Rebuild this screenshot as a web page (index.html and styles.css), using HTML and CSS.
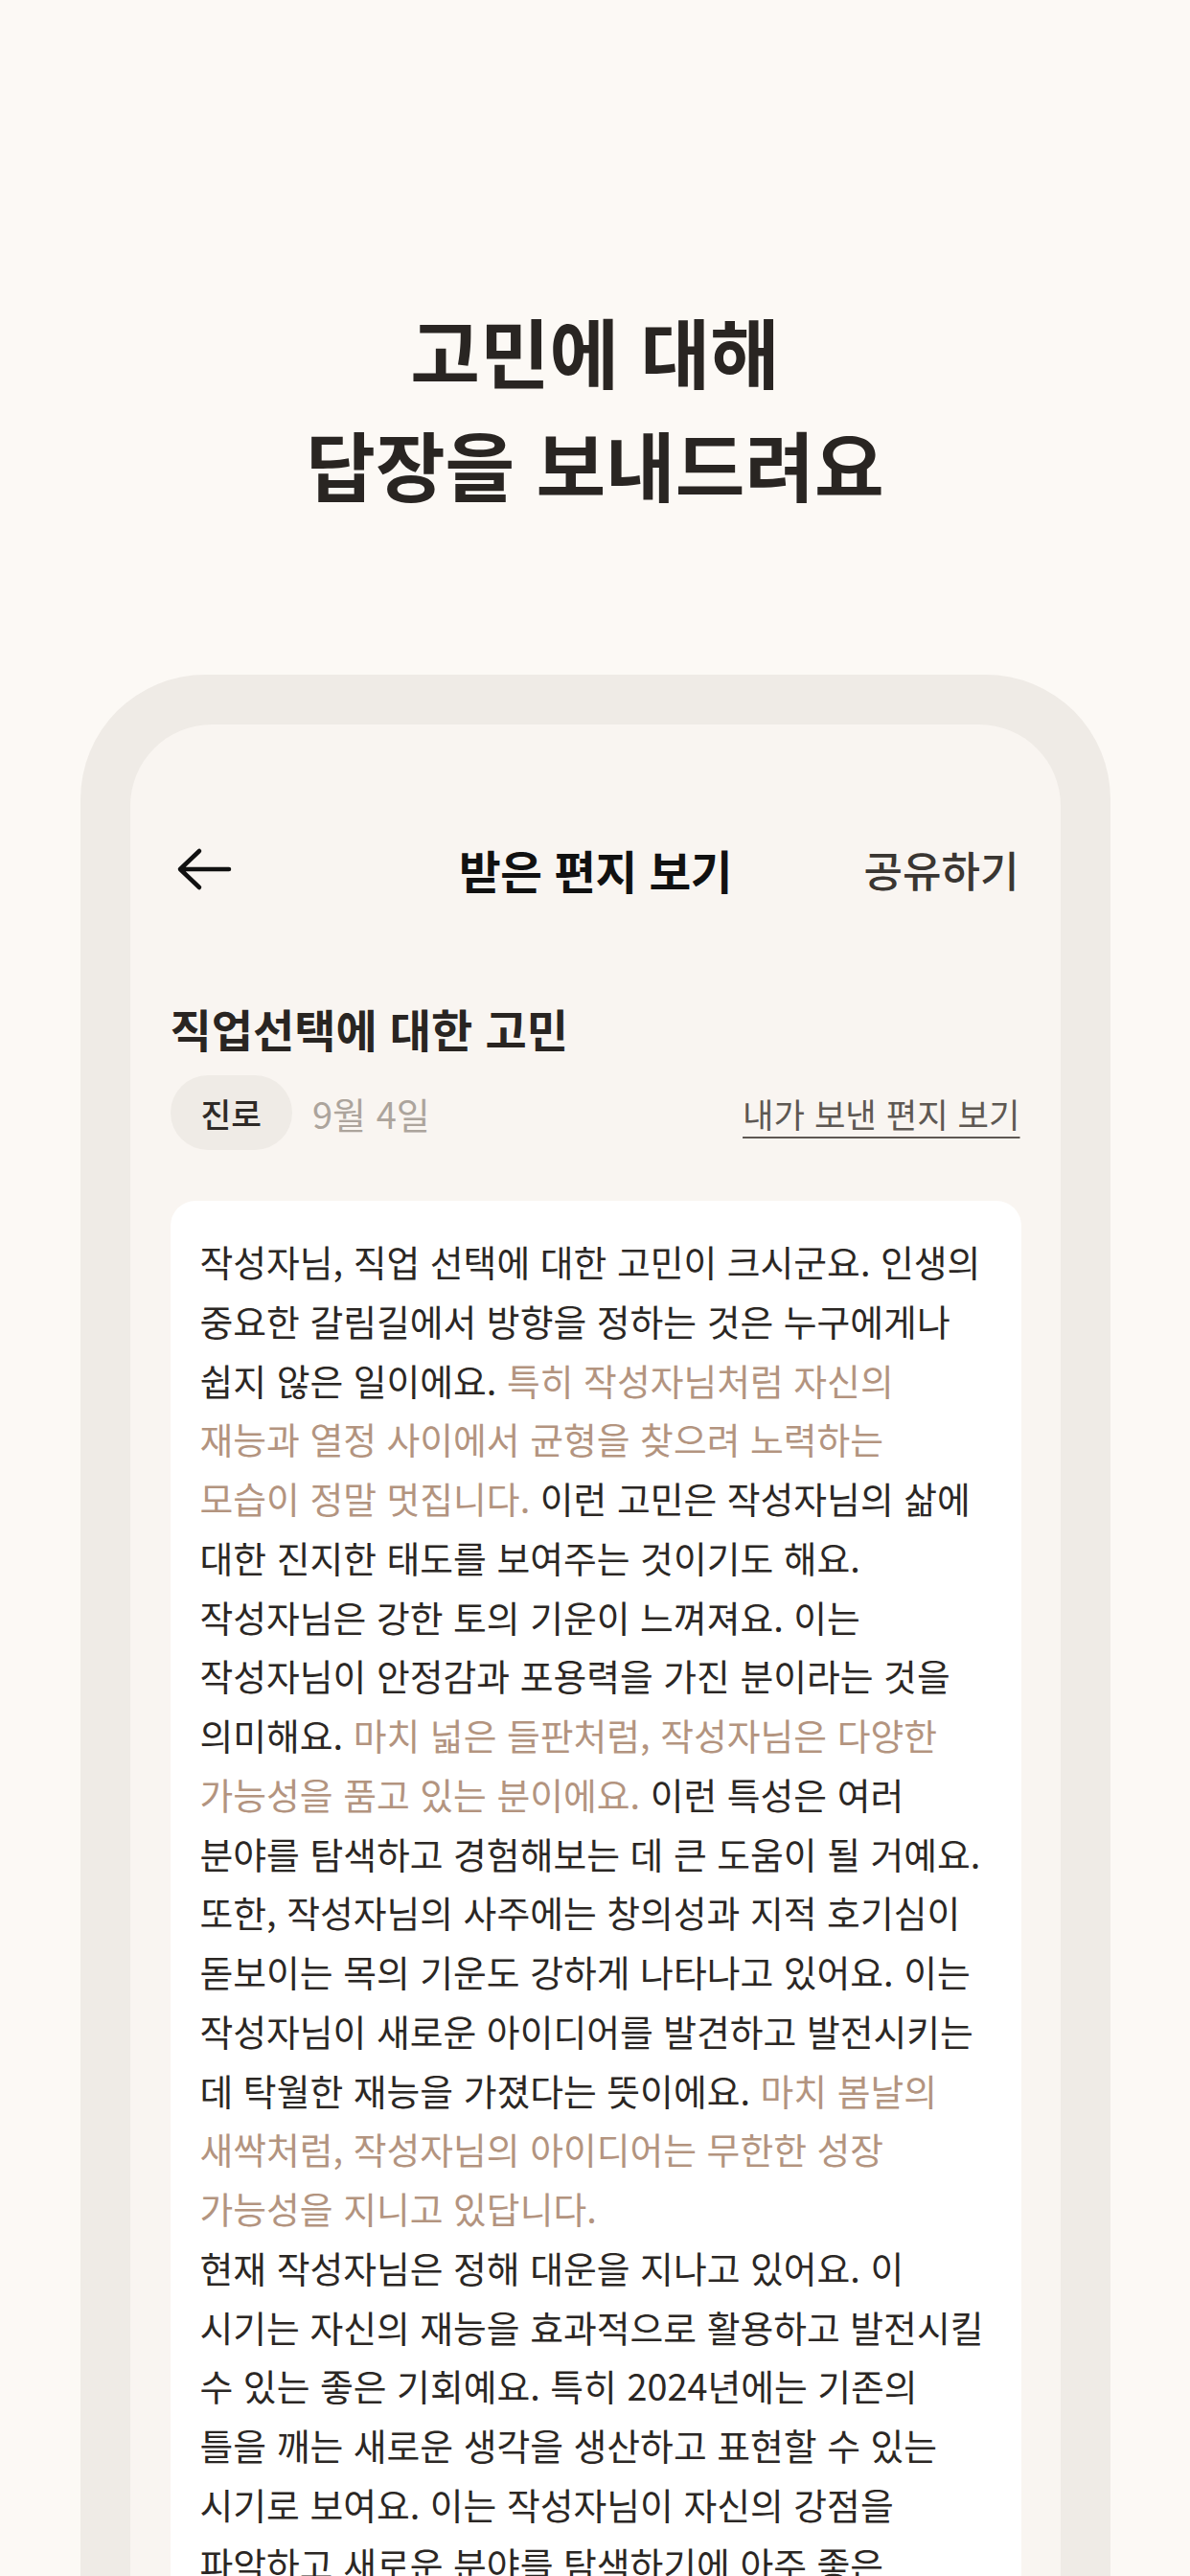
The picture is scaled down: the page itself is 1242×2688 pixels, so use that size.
FILE: index.html
```html
<!DOCTYPE html>
<html lang="ko">
<head>
<meta charset="utf-8">
<title>받은 편지 보기</title>
<link rel="stylesheet" href="styles.css">
</head>
<body>
<div class="page">
  <h1 class="hero-title">고민에 대해<br>답장을 보내드려요</h1>

  <div class="device">
    <div class="screen">
      <header class="nav">
        <button class="nav-back" aria-label="뒤로가기">
          <svg width="60" height="48" viewBox="0 0 60 48" aria-hidden="true">
            <path d="M5 24 H56 M25 5 L5 24 L25 43" fill="none" stroke="#111111" stroke-width="4.5" stroke-linecap="round" stroke-linejoin="round"/>
          </svg>
        </button>
        <div class="nav-title">받은 편지 보기</div>
        <div class="nav-action">공유하기</div>
      </header>

      <h2 class="subject">직업선택에 대한 고민</h2>
      <div class="meta">
        <span class="chip">진로</span>
        <span class="date">9월 4일</span>
        <a class="sent-link" href="#">내가 보낸 편지 보기</a>
      </div>

      <article class="letter">
        <p class="letter-text">작성자님, 직업 선택에 대한 고민이 크시군요. 인생의<br>중요한 갈림길에서 방향을 정하는 것은 누구에게나<br>쉽지 않은 일이에요. <span class="hl">특히 작성자님처럼 자신의<br>재능과 열정 사이에서 균형을 찾으려 노력하는<br>모습이 정말 멋집니다.</span> 이런 고민은 작성자님의 삶에<br>대한 진지한 태도를 보여주는 것이기도 해요.<br>작성자님은 강한 토의 기운이 느껴져요. 이는<br>작성자님이 안정감과 포용력을 가진 분이라는 것을<br>의미해요. <span class="hl">마치 넓은 들판처럼, 작성자님은 다양한<br>가능성을 품고 있는 분이에요.</span> 이런 특성은 여러<br>분야를 탐색하고 경험해보는 데 큰 도움이 될 거예요.<br>또한, 작성자님의 사주에는 창의성과 지적 호기심이<br>돋보이는 목의 기운도 강하게 나타나고 있어요. 이는<br>작성자님이 새로운 아이디어를 발견하고 발전시키는<br>데 탁월한 재능을 가졌다는 뜻이에요. <span class="hl">마치 봄날의<br>새싹처럼, 작성자님의 아이디어는 무한한 성장<br>가능성을 지니고 있답니다.</span><br>현재 작성자님은 정해 대운을 지나고 있어요. 이<br>시기는 자신의 재능을 효과적으로 활용하고 발전시킬<br>수 있는 좋은 기회예요. 특히 2024년에는 기존의<br>틀을 깨는 새로운 생각을 생산하고 표현할 수 있는<br>시기로 보여요. 이는 작성자님이 자신의 강점을<br>파악하고 새로운 분야를 탐색하기에 아주 좋은</p>
      </article>
    </div>
  </div>
</div>
</body>
</html>
```

FILE: styles.css
```css
* {
  box-sizing: border-box;
}

html, body {
  margin: 0;
  padding: 0;
}

body {
  background: #fcf9f5;
  font-family: "Noto Sans CJK KR", "Noto Sans", sans-serif;
  color: #2b2724;
}

.page {
  height: 2688px;
  overflow: hidden;
  display: flex;
  flex-direction: column;
  align-items: center;
}

.hero-title {
  margin: 307px 0 0;
  font-size: 79px;
  line-height: 118px;
  font-weight: 700;
  text-align: center;
  color: #292522;
  letter-spacing: 0;
}

.device {
  margin-top: 161px;
  width: 1075px;
  flex: 1 0 auto;
  background: #efebe6;
  border-radius: 130px 130px 0 0;
  padding: 52px 52px 0;
  display: flex;
  flex-direction: column;
}

.screen {
  flex: 1 0 auto;
  background: #f9f5f1;
  border-radius: 85px 85px 0 0;
  padding: 101px 41px 0 42px;
  display: flex;
  flex-direction: column;
}

.nav {
  height: 100px;
  display: grid;
  grid-template-columns: 1fr auto 1fr;
  align-items: center;
}

.nav-back {
  justify-self: start;
  margin-left: 5px;
  padding: 0;
  border: 0;
  background: none;
  display: flex;
}

.nav-title {
  font-size: 47.5px;
  font-weight: 700;
  color: #111111;
  letter-spacing: -0.5px;
}

.nav-action {
  justify-self: end;
  font-size: 44px;
  font-weight: 500;
  color: #3a3632;
  margin-right: 2px;
}

.subject {
  margin: 86px 0 0;
  font-size: 47px;
  line-height: 60px;
  font-weight: 700;
  color: #292522;
  letter-spacing: 0;
}

.meta {
  margin-top: 19px;
  display: flex;
  align-items: center;
}

.chip {
  height: 78px;
  padding: 0 32px;
  border-radius: 39px;
  background: #efebe6;
  display: inline-flex;
  align-items: center;
  font-size: 34.5px;
  font-weight: 500;
  color: #2e2a27;
}

.date {
  margin-left: 21px;
  font-size: 38px;
  color: #aca49c;
}

.sent-link {
  margin-left: auto;
  font-size: 35.3px;
  color: #5e5853;
  text-decoration: underline;
  text-decoration-thickness: 2px;
  text-underline-offset: 9px;
  margin-right: 1px;
}

.letter {
  margin-top: 53px;
  flex: 1 0 auto;
  background: #ffffff;
  border-radius: 26px 26px 0 0;
  padding: 32px 10px 0 31px;
}

.letter-text {
  margin: 0;
  font-size: 37.8px;
  line-height: 61.75px;
  white-space: nowrap;
  color: #2b2724;
}

.hl {
  color: #b3947f;
}
```
